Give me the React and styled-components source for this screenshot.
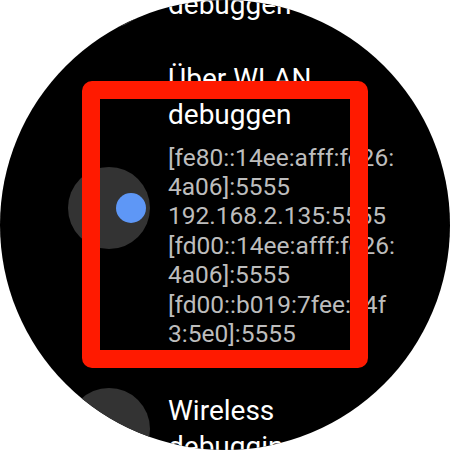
import React from "react";
import styled, { createGlobalStyle } from "styled-components";

const Global = createGlobalStyle`
  html, body { margin: 0; padding: 0; background: #ffffff; }
  body { font-family: Roboto, "Noto Sans", "Liberation Sans", sans-serif; }
`;

const Watch = styled.div`
  position: relative;
  width: 450px;
  height: 450px;
  border-radius: 50%;
  background: #000;
  overflow: hidden;
`;

const List = styled.div`
  display: flex;
  flex-direction: column;
  margin-top: -71px;
`;

const Row = styled.div`
  display: grid;
  grid-template-columns: 82px 229px;
  column-gap: 18px;
  align-items: center;
  padding: 16.5px 0 16.5px 68px;
`;

const IconCircle = styled.div`
  width: 82px;
  height: 82px;
  border-radius: 50%;
  background: #333333;
  display: flex;
  align-items: center;
  justify-content: ${(p) => (p.$on ? "flex-end" : "center")};
  padding-right: ${(p) => (p.$on ? "4px" : "0")};
  box-sizing: border-box;
`;

const Dot = styled.div`
  width: 30px;
  height: 30px;
  border-radius: 50%;
  background: #5e97f6;
`;

const TextCol = styled.div`
  display: flex;
  flex-direction: column;
`;

const Title = styled.div`
  color: #ffffff;
  font-size: 28px;
  line-height: 36px;
`;

const Sub = styled.div`
  display: flex;
  flex-direction: column;
  margin: 10px 0 7px;
`;

const SubLine = styled.div`
  color: #bdbdbd;
  font-size: 24.5px;
  line-height: 29.4px;
  word-break: break-all;
`;

const Overlay = styled.div`
  position: absolute;
  left: 82px;
  top: 81px;
  width: 286px;
  height: 287px;
  box-sizing: border-box;
  border: 18px solid #ff1a00;
  border-radius: 10px;
  pointer-events: none;
`;

function WifiIcon() {
  return (
    <svg width="24" height="24" viewBox="0 0 24 24" fill="none">
      <path
        d="M4 8c2.2-2.2 5-3.3 8-3.3s5.8 1.1 8 3.3M7 11.5c1.4-1.3 3.1-2 5-2s3.6.7 5 2M10 15c.6-.5 1.2-.7 2-.7s1.4.2 2 .7"
        stroke="#ffffff"
        strokeWidth="2.2"
        strokeLinecap="round"
      />
      <circle cx="12" cy="18.5" r="1.6" fill="#ffffff" />
    </svg>
  );
}

const addresses = [
  "[fe80::14ee:afff:fe26:4a06]:5555",
  "192.168.2.135:5555",
  "[fd00::14ee:afff:fe26:4a06]:5555",
  "[fd00::b019:7fee:e4f3:5e0]:5555",
];

export default function App() {
  return (
    <>
      <Global />
      <Watch>
        <List>
          <Row>
            <IconCircle />
            <TextCol>
              <Title>Über USB debuggen</Title>
            </TextCol>
          </Row>
          <Row>
            <IconCircle $on>
              <Dot />
            </IconCircle>
            <TextCol>
              <Title>Über WLAN debuggen</Title>
              <Sub>
                {addresses.map((a) => (
                  <SubLine key={a}>{a}</SubLine>
                ))}
              </Sub>
            </TextCol>
          </Row>
          <Row>
            <IconCircle>
              <WifiIcon />
            </IconCircle>
            <TextCol>
              <Title>Wireless debugging</Title>
            </TextCol>
          </Row>
        </List>
        <Overlay />
      </Watch>
    </>
  );
}
